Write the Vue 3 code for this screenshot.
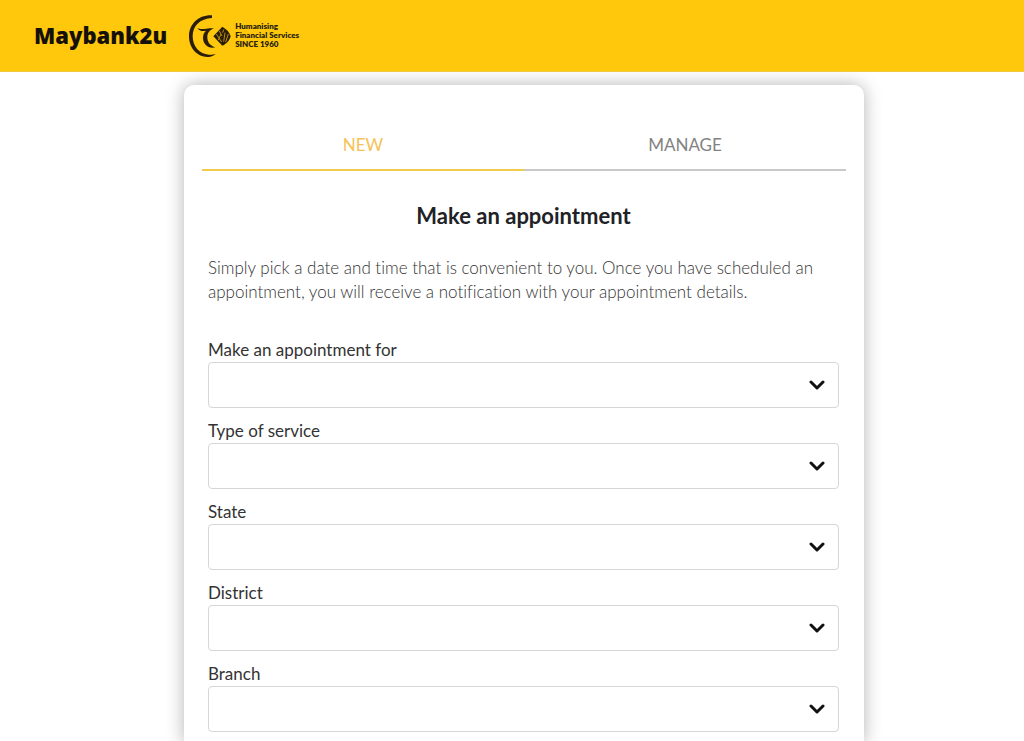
<script setup>
import { ref } from 'vue'

const tabs = ['NEW', 'MANAGE']
const active = ref('NEW')
const fields = [
  { id: 'purpose', label: 'Make an appointment for' },
  { id: 'service', label: 'Type of service' },
  { id: 'state', label: 'State' },
  { id: 'district', label: 'District' },
  { id: 'branch', label: 'Branch' },
]
</script>

<template>
  <div class="page">
    <header class="header">
      <span class="wordmark">Maybank2u</span>
      <div class="anniversary">
        <svg class="emblem" viewBox="0 0 144 144" aria-hidden="true">
          <path d="M78 10C38 8 9 36 9 73c0 38 28 64 58 62 9 0 16-4 22-9-7 2-13 3-20 2C40 126 20 103 20 72 20 42 42 20 78 18z" />
          <path d="M34 48c12 7 27 0 50 1-14 6-20 14-20 27 0 15 9 26 24 30-22 5-37-10-37-29 0-9 3-16 9-21-11 3-20 1-26-8z" />
          <path d="M82 73l27-29c12 7 22 16 25 29-3 13-13 23-25 28z" />
          <path class="stripes" d="M91 66l16 24M100 57l8 15M113 53l-3 9M117 62l-4 27M127 66l-8 24M97 84l8-18" />
        </svg>
        <div class="tagline">
          <span>Humanising</span>
          <span>Financial Services</span>
          <span>SINCE 1960</span>
        </div>
      </div>
    </header>

    <div class="content">
      <main class="card">
        <nav class="tabs">
          <button
            v-for="tab in tabs"
            :key="tab"
            type="button"
            class="tab"
            :class="{ active: active === tab }"
            @click="active = tab"
          >{{ tab }}</button>
        </nav>
        <form class="form">
          <h1 class="title">Make an appointment</h1>
          <p class="intro">
            Simply pick a date and time that is convenient to you. Once you have scheduled an
            appointment, you will receive a notification with your appointment details.
          </p>
          <div v-for="field in fields" :key="field.id" class="field">
            <label :for="field.id">{{ field.label }}</label>
            <div class="control">
              <select :id="field.id"><option value=""></option></select>
              <svg class="chevron" viewBox="0 0 16 10" aria-hidden="true">
                <path d="M2 2l6 6 6-6" />
              </svg>
            </div>
          </div>
        </form>
      </main>
    </div>
  </div>
</template>

<style>
body {
  margin: 0;
  background: #fff;
}
</style>

<style scoped>
.page {
  display: flex;
  flex-direction: column;
  min-height: 100vh;
  overflow: hidden;
  font-family: Lato, "Liberation Sans", sans-serif;
  font-variant-ligatures: none;
  color: #333;
}

.header {
  position: relative;
  z-index: 1;
  display: flex;
  align-items: center;
  gap: 19px;
  height: 72px;
  padding: 0 34px;
  box-sizing: border-box;
  background: #ffc80d;
  border-bottom: 1px solid #efcb3c;
}

.wordmark {
  padding-bottom: 2px;
  font-family: "Open Sans", "Noto Sans", sans-serif;
  font-size: 22px;
  font-weight: 800;
  line-height: 32px;
  color: #15110a;
}

.anniversary {
  display: flex;
  align-items: center;
  gap: 1px;
}

.emblem {
  width: 48px;
  height: 48px;
  fill: #2a1e08;
}

.stripes {
  fill: none;
  stroke: #b98c0c;
  stroke-width: 3;
}

.tagline {
  display: flex;
  flex-direction: column;
  font-family: Lato, "Noto Sans", sans-serif;
  font-size: 8px;
  font-weight: 800;
  line-height: 9px;
  color: #2a1e08;
}

.content {
  flex: 1;
  display: flex;
  justify-content: center;
  padding: 13px 0 0 24px;
}

.card {
  width: 100%;
  max-width: 680px;
  padding: 34px 18px 0;
  box-sizing: border-box;
  background: #fff;
  border-radius: 10px 10px 0 0;
  box-shadow: 0 0 18px rgba(0, 0, 0, 0.3);
}

.tabs {
  display: flex;
}

.tab {
  flex: 1;
  height: 52px;
  padding: 0;
  border: 0;
  border-bottom: 2px solid #c9c9c9;
  background: none;
  font: inherit;
  font-size: 17px;
  color: #828282;
  cursor: pointer;
}

.tab.active {
  color: #f5c256;
  border-bottom-color: #f0cb4d;
}

.form {
  padding: 0 7px 0 6px;
}

.title {
  margin: 29px 0 24px;
  font-size: 22px;
  font-weight: 700;
  line-height: 32px;
  text-align: center;
  color: #212226;
}

.intro {
  margin: 0 0 34px;
  font-size: 17px;
  font-weight: 300;
  line-height: 24px;
  color: #333;
}

.field {
  margin-bottom: 11px;
}

.field label {
  display: block;
  font-size: 17px;
  line-height: 24px;
}

.control {
  position: relative;
}

.control select {
  display: block;
  width: 100%;
  height: 46px;
  padding: 0 40px 0 12px;
  border: 1px solid #d4d6d8;
  border-radius: 4px;
  appearance: none;
  background: #fff;
  font: inherit;
  color: inherit;
}

.chevron {
  position: absolute;
  top: 18px;
  right: 14px;
  width: 16px;
  height: 10px;
  fill: none;
  stroke: #111;
  stroke-width: 3;
  stroke-linecap: round;
  stroke-linejoin: round;
  pointer-events: none;
}
</style>
